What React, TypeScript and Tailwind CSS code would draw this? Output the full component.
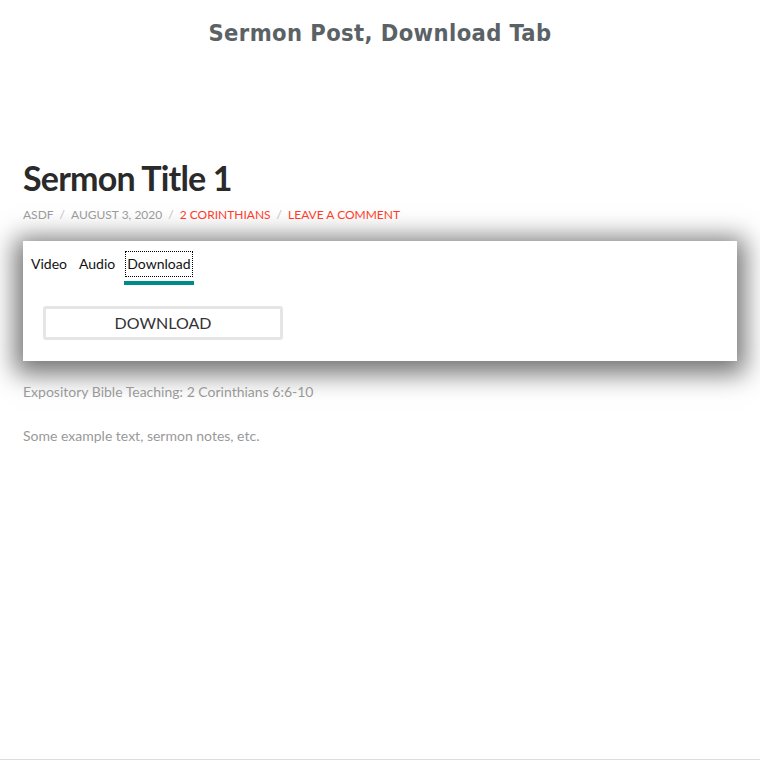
import { useState } from "react";

const tabs = ["Video", "Audio", "Download"];

export default function App() {
  const [active, setActive] = useState("Download");

  return (
    <div className="h-[760px] flex flex-col bg-white font-['Lato',sans-serif]">
      {/* Site header */}
      <header className="h-[64px] pt-[3px] flex items-center justify-center">
        <h1 className="font-['DejaVu_Sans_Condensed','DejaVu_Sans',sans-serif] font-bold text-[23.5px] text-[#5b6266] tracking-[0.4px]">
          Sermon Post, Download Tab
        </h1>
      </header>

      <main className="flex-1 px-[23px] pt-[94px]">
        <h2 className="text-[34px] leading-[40px] font-bold text-[#2a2a2a] tracking-[-0.8px]">
          Sermon Title 1
        </h2>

        <div className="mt-[9px] flex items-center text-[12px] uppercase text-[#9a9a9a] leading-[16px]">
          <span>asdf</span>
          <span className="mx-[6px] text-[#bbb]">/</span>
          <span>August 3, 2020</span>
          <span className="mx-[6px] text-[#bbb]">/</span>
          <a className="text-[#ff3b2a]">2 Corinthians</a>
          <span className="mx-[6px] text-[#bbb]">/</span>
          <a className="text-[#ff3b2a]">Leave a Comment</a>
        </div>

        {/* Media tabs */}
        <div className="mt-[18px] bg-white shadow-[0_5px_24px_8px_rgba(0,0,0,0.55)] px-[8px] pt-[12px] pb-[21px]">
          <div className="flex items-start gap-[12px] text-[14px] text-[#111]">
            {tabs.map((t) => (
              <button
                key={t}
                onClick={() => setActive(t)}
                className="flex flex-col items-center"
              >
                <span
                  className={
                    active === t
                      ? "leading-[22px] outline-1 outline-offset-[1px] outline-dotted outline-black"
                      : "leading-[22px]"
                  }
                >
                  {t}
                </span>
                <span
                  className={
                    active === t
                      ? "mt-[6px] h-[4px] w-[calc(100%+6px)] bg-[#008b8b]"
                      : "mt-[6px] h-[4px] w-full bg-transparent"
                  }
                />
              </button>
            ))}
          </div>

          <div className="pl-[12px] pt-[21px]">
            <button className="w-[240px] h-[34px] border-[3px] border-[#e5e5e5] rounded-[3px] text-[16px] text-[#333] uppercase bg-white">
              Download
            </button>
          </div>
        </div>

        <p className="mt-[23px] text-[14px] text-[#999] leading-[16px]">
          Expository Bible Teaching: 2 Corinthians 6:6-10
        </p>
        <p className="mt-[28px] text-[14px] text-[#999] leading-[16px]">
          Some example text, sermon notes, etc.
        </p>
      </main>

      <footer className="h-px border-t border-[#dcdcdc]" />
    </div>
  );
}
